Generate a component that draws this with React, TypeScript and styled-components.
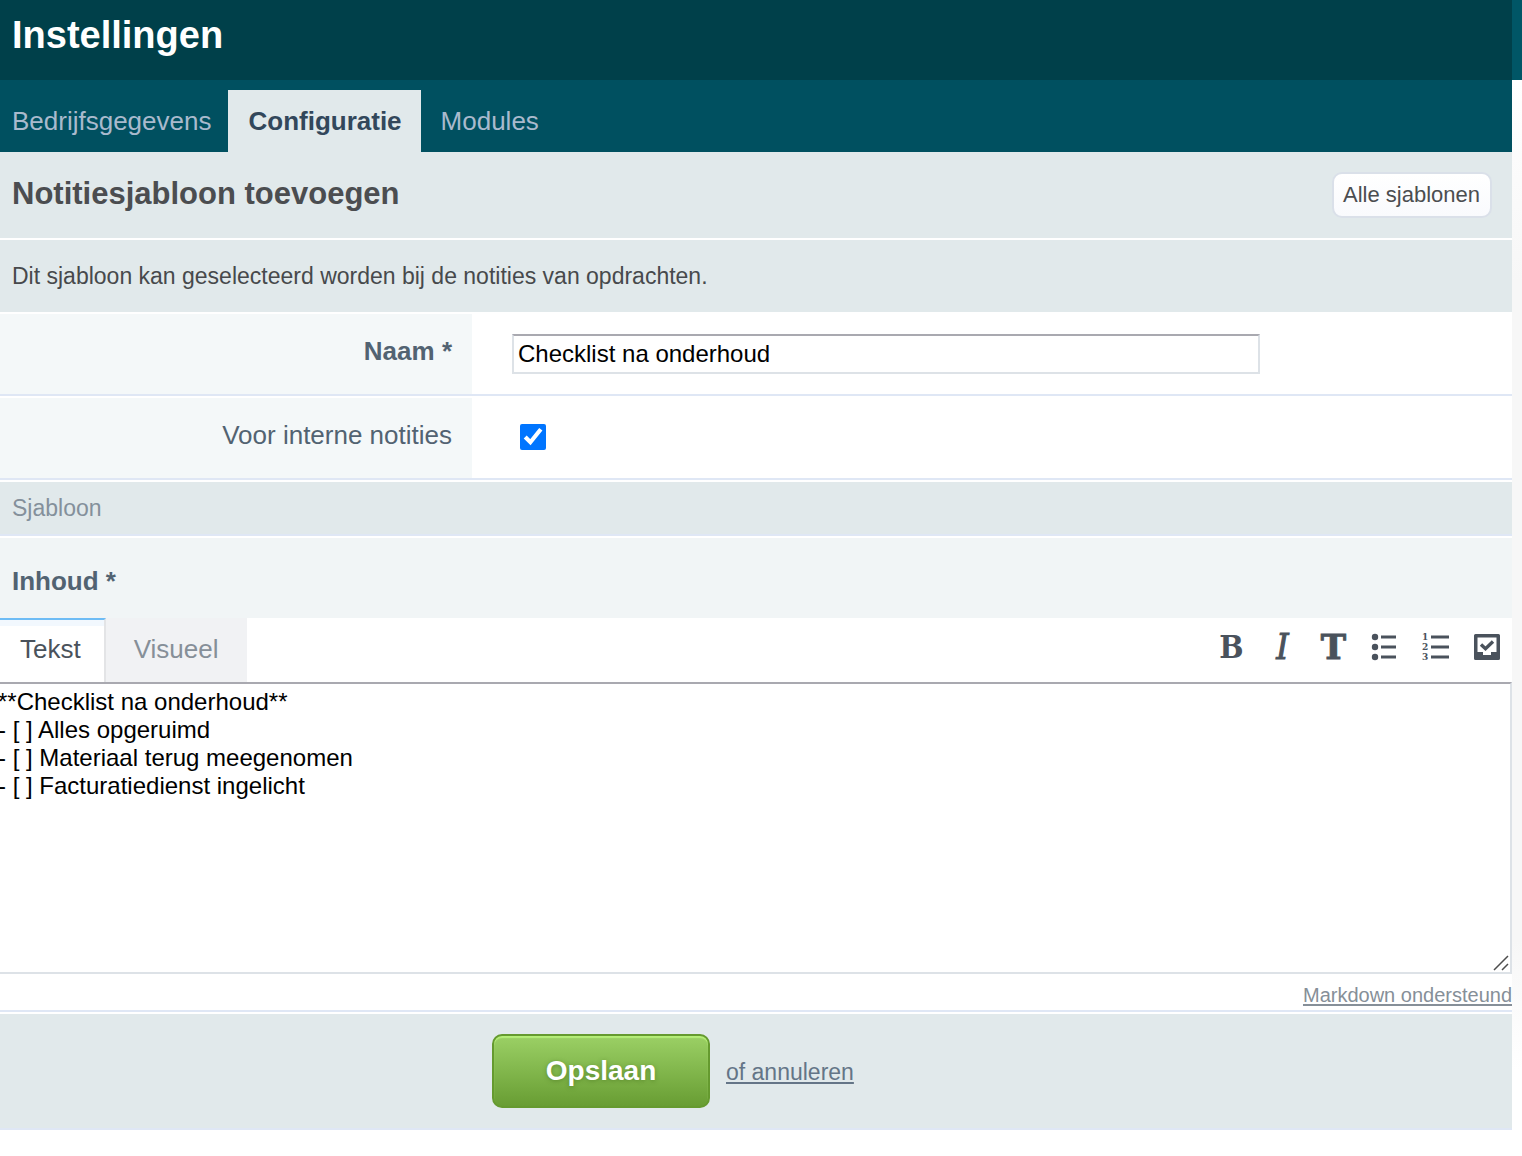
import React, { useState } from "react";
import styled, { createGlobalStyle, css } from "styled-components";

const GlobalStyle = createGlobalStyle`
  *, *::before, *::after { box-sizing: border-box; }
  html { background: #fff; }
  body {
    margin: 0;
    color: #4b4d50;
    font-family: "Liberation Sans", Arial, sans-serif;
    font-size: 23px;
    line-height: 28px;
  }
  button, input, textarea { font-family: inherit; }
`;

const Page = styled.div`
  padding-right: 10px;
  background: linear-gradient(#005666 80px, transparent 80px),
    linear-gradient(#fff 80px, #f7f7f7 280px, #f7f7f7 940px, #fff 1070px);
`;

const Shell = styled.main`
  background: #fff;
  overflow: hidden;
`;

const Header = styled.header`
  height: 80px;
  padding: 12px;
  background: #00404a;
`;

const PageTitle = styled.h1`
  margin: 0;
  color: #fff;
  font-size: 38px;
  line-height: 46px;
`;

const Nav = styled.nav`
  display: flex;
  padding-top: 10px;
  background: #005060;
`;

const NavLink = styled.a<{ $active?: boolean }>`
  padding: 17px 20px;
  color: #a9bacd;
  font-size: 26px;
  line-height: 28px;
  text-decoration: none;

  &:first-child { padding-left: 12px; padding-right: 17px; }

  ${({ $active }) => $active && css`
    padding: 17px 19px 17px 20px;
    background: #e1e9eb;
    color: #32475b;
    font-weight: bold;
  `}
`;

const TitleBar = styled.div`
  display: flex;
  align-items: center;
  justify-content: space-between;
  height: 86px;
  padding: 0 20px 0 12px;
  background: #e1e9eb;
`;

const SectionTitle = styled.h2`
  margin: 0;
  font-size: 31px;
  line-height: 36px;
  padding-bottom: 2px;
`;

const TemplatesButton = styled.button`
  height: 46px;
  padding: 0 10px 0 9px;
  border: 2px solid #dae0e9;
  border-radius: 10px;
  background: linear-gradient(#fff, #f9fafd);
  color: #4b4d50;
  font-size: 22px;
  line-height: 28px;
`;

const Intro = styled.p`
  margin: 2px 0;
  padding: 22px 12px;
  background: #e1e9eb;
  color: #47494c;
`;

const FieldRow = styled.div`
  display: grid;
  grid-template-columns: 472px 1fr;
  height: 82px;
  margin-bottom: 2px;
  border-bottom: 2px solid #dfe7f5;
`;

const FieldLabel = styled.label<{ $required?: boolean }>`
  padding: 23px 20px;
  background: #f4f8f9;
  color: #526372;
  font-size: 26px;
  font-weight: ${({ $required }) => ($required ? "bold" : "normal")};
  text-align: right;
`;

const FieldValue = styled.div`
  display: flex;
  align-items: center;
  padding: 0 40px;
`;

const boxBorder = css`
  border: 2px solid #dde2e7;
  border-top-color: #a9a9b0;
`;

const NameInput = styled.input`
  ${boxBorder}
  width: 100%;
  max-width: 748px;
  height: 40px;
  padding: 0 4px;
  background: #fff;
  color: #000;
  font-size: 24px;
  outline: none;
`;

const Checkbox = styled.input`
  width: 26px;
  height: 26px;
  margin: 0 8px 2px;
  accent-color: #0075ff;
`;

const GroupHeading = styled.h3`
  margin: 0 0 2px;
  padding: 12px;
  border-bottom: 2px solid #dfe7f5;
  background: #e1e9eb;
  color: #84909b;
  font-size: 23px;
  font-weight: normal;
  line-height: 28px;
`;

const ContentLabel = styled.label`
  display: block;
  height: 80px;
  padding: 29px 12px;
  background: #f1f5f6;
  color: #526372;
  font-size: 26px;
  font-weight: bold;
`;

const EditorBar = styled.div`
  display: flex;
  justify-content: space-between;
  height: 64px;
`;

const EditorTabs = styled.div`
  display: flex;
`;

const EditorTab = styled.button<{ $active: boolean }>`
  padding: 0 28px 2px;
  border: 0;
  background: #f1f2f4;
  color: #868f98;
  font-size: 26px;
  line-height: 28px;

  ${({ $active }) => $active && css`
    padding: 0 23px 4px 20px;
    border-top: 2px solid #6ebcf5;
    border-right: 2px solid #e3e4e6;
    background: linear-gradient(#f2f8fe 6px, #fff 6px);
    color: #4a525b;
  `}
`;

const Tools = styled.div`
  display: flex;
`;

const Tool = styled.button`
  display: flex;
  justify-content: center;
  align-items: center;
  width: 51px;
  padding: 0 0 6px;
  border: 0;
  background: none;
  color: #4a525c;
`;

const Glyph = styled.span<{ $kind: "bold" | "italic" | "title" }>`
  ${({ $kind }) => $kind === "bold" && css`font: bold 32px/36px "DejaVu Serif Condensed", "DejaVu Serif", serif;`}
  ${({ $kind }) => $kind === "italic" && css`
    font: italic 35px/36px "DejaVu Serif Condensed", "DejaVu Serif", serif;
    -webkit-text-stroke: 1px;
  `}
  ${({ $kind }) => $kind === "title" && css`
    font: bold 34px/36px "DejaVu Serif", serif;
    -webkit-text-stroke: 1px;
  `}
`;

const EditorBox = styled.div`
  position: relative;
  display: flex;
`;

const Editor = styled.textarea`
  ${boxBorder}
  flex: 1;
  height: 292px;
  margin: 0 0 0 -8px;
  padding: 4px;
  border-radius: 0;
  background: #fff;
  color: #000;
  font-size: 24px;
  line-height: 28px;
  resize: none;
  outline: none;
`;

const Grip = styled.svg`
  position: absolute;
  right: 3px;
  bottom: 3px;
`;

const HelpLine = styled.div`
  display: flex;
  justify-content: flex-end;
  height: 38px;
  margin-bottom: 2px;
  padding-top: 7px;
  border-bottom: 2px solid #dfe7f5;
`;

const TextLink = styled.a<{ $muted?: boolean }>`
  color: ${({ $muted }) => ($muted ? "#868f98" : "#647587")};
  font-size: ${({ $muted }) => ($muted ? "20px" : "23px")};
  text-decoration-thickness: 2px;
  text-underline-offset: 2px;
`;

const Footer = styled.footer`
  display: flex;
  align-items: center;
  gap: 16px;
  padding: 20px 0 20px 492px;
  border-bottom: 2px solid #dfe7f5;
  background: #e1e9eb;

  ${TextLink} { padding-top: 2px; }
`;

const SaveButton = styled.button`
  width: 218px;
  height: 74px;
  padding: 0;
  border: 2px solid #659a2f;
  border-radius: 10px;
  background: linear-gradient(#9bd065, #689d33);
  box-shadow: inset 0 2px 1px #b5ee78;
  color: #fff;
  font-size: 28px;
  font-weight: bold;
  text-shadow: 0 1px 4px rgba(60, 100, 20, 0.5);
`;

const BulletListIcon = () => (
  <svg width="28" height="28" viewBox="0 0 28 28" fill="currentColor" aria-hidden="true">
    {[4, 14, 24].map((y) => (
      <g key={y}>
        <circle cx="4" cy={y} r="3.2" />
        <rect x="10" y={y - 1.5} width="15" height="3" />
      </g>
    ))}
  </svg>
);

const NumberListIcon = () => (
  <svg width="28" height="28" viewBox="0 0 28 28" fill="currentColor" aria-hidden="true">
    {[4, 14, 24].map((y, i) => (
      <g key={y}>
        <text x="0" y={y + 3} fontFamily="DejaVu Serif, serif" fontWeight="bold" fontSize="9">{i + 1}</text>
        <rect x="9" y={y - 1.5} width="18" height="3" />
      </g>
    ))}
  </svg>
);

const TaskIcon = () => (
  <svg width="26" height="26" viewBox="0 0 26 26" aria-hidden="true">
    <path
      fill="currentColor"
      fillRule="evenodd"
      d="M1.5 0h23A1.5 1.5 0 0 1 26 1.5v23a1.5 1.5 0 0 1-1.5 1.5h-23A1.5 1.5 0 0 1 0 24.5v-23A1.5 1.5 0 0 1 1.5 0ZM3.500 3.500v14.500h5.500v3h8v-3h5.500V3.500Z"
    />
    <path fill="none" stroke="currentColor" strokeWidth="3.400" d="M7 10.500l4.500 4.200L19 7.500" />
  </svg>
);

const START_TEXT = [
  "**Checklist na onderhoud**",
  "- [ ] Alles opgeruimd",
  "- [ ] Materiaal terug meegenomen",
  "- [ ] Facturatiedienst ingelicht",
].join("\n");

export default function App() {
  const [name, setName] = useState("Checklist na onderhoud");
  const [internal, setInternal] = useState(true);
  const [mode, setMode] = useState("Tekst");
  const [content, setContent] = useState(START_TEXT);

  return (
    <Page>
      <GlobalStyle />
      <Shell>
        <Header>
          <PageTitle>Instellingen</PageTitle>
        </Header>
        <Nav>
          <NavLink href="#bedrijfsgegevens">Bedrijfsgegevens</NavLink>
          <NavLink href="#configuratie" $active aria-current="page">Configuratie</NavLink>
          <NavLink href="#modules">Modules</NavLink>
        </Nav>
        <TitleBar>
          <SectionTitle>Notitiesjabloon toevoegen</SectionTitle>
          <TemplatesButton type="button">Alle sjablonen</TemplatesButton>
        </TitleBar>
        <Intro>Dit sjabloon kan geselecteerd worden bij de notities van opdrachten.</Intro>
        <form onSubmit={(e) => e.preventDefault()}>
          <FieldRow>
            <FieldLabel htmlFor="name" $required>Naam *</FieldLabel>
            <FieldValue>
              <NameInput id="name" type="text" value={name} onChange={(e) => setName(e.target.value)} />
            </FieldValue>
          </FieldRow>
          <FieldRow>
            <FieldLabel htmlFor="internal">Voor interne notities</FieldLabel>
            <FieldValue>
              <Checkbox id="internal" type="checkbox" checked={internal} onChange={(e) => setInternal(e.target.checked)} />
            </FieldValue>
          </FieldRow>
          <GroupHeading>Sjabloon</GroupHeading>
          <ContentLabel htmlFor="content">Inhoud *</ContentLabel>
          <EditorBar>
            <EditorTabs>
              {["Tekst", "Visueel"].map((tab) => (
                <EditorTab key={tab} type="button" $active={tab === mode} onClick={() => setMode(tab)}>
                  {tab}
                </EditorTab>
              ))}
            </EditorTabs>
            <Tools>
              <Tool type="button"><Glyph $kind="bold">B</Glyph></Tool>
              <Tool type="button"><Glyph $kind="italic">I</Glyph></Tool>
              <Tool type="button"><Glyph $kind="title">T</Glyph></Tool>
              <Tool type="button"><BulletListIcon /></Tool>
              <Tool type="button"><NumberListIcon /></Tool>
              <Tool type="button"><TaskIcon /></Tool>
            </Tools>
          </EditorBar>
          <EditorBox>
            <Editor id="content" value={content} spellCheck={false} onChange={(e) => setContent(e.target.value)} />
            <Grip width="16" height="16" viewBox="0 0 16 16" stroke="#4d4d4d" strokeWidth="1.5" aria-hidden="true">
              <path d="M1 15L15 1M9 15L15 9" />
            </Grip>
          </EditorBox>
          <HelpLine>
            <TextLink href="#markdown" $muted>Markdown ondersteund</TextLink>
          </HelpLine>
          <Footer>
            <SaveButton type="submit">Opslaan</SaveButton>
            <TextLink href="#annuleren">of annuleren</TextLink>
          </Footer>
        </form>
      </Shell>
    </Page>
  );
}
